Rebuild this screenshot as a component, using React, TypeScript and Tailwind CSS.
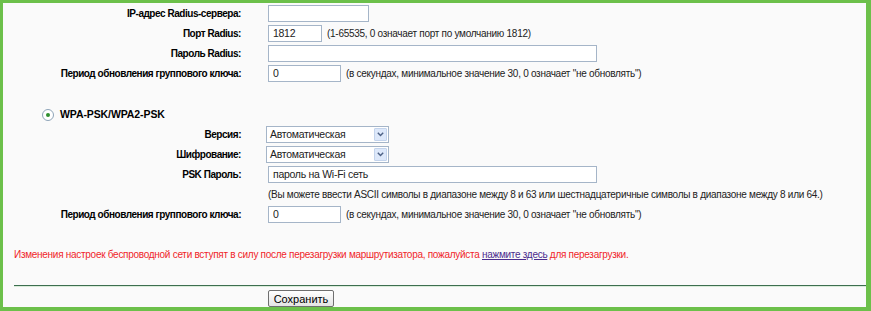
import React from 'react';

const labelCls = 'w-[238px] shrink-0 text-right text-[10px] tracking-[-0.46px] font-bold text-black';
const inputCls =
  'h-[17px] border border-[#a5b5c8] bg-white px-[4px] text-[10.5px] leading-[15px] text-[#222] outline-none';

function Row({ label, children, className = '' }: { label: string; children?: React.ReactNode; className?: string }) {
  return (
    <div className={`flex h-[20px] items-center ${className}`}>
      <div className={labelCls}>{label}</div>
      <div className="ml-[27px] flex items-center">{children}</div>
    </div>
  );
}

function Hint({ children, className = '' }: { children: React.ReactNode; className?: string }) {
  return <span className={`ml-[5px] whitespace-nowrap text-[#222] ${className}`}>{children}</span>;
}

function Select({ value }: { value: string }) {
  return (
    <div className="-ml-[2px] flex h-[17px] w-[123px] items-center border border-[#a5b5c8] bg-white">
      <span className="flex-1 pl-[3px] text-[10.5px] leading-[15px] text-[#222]">{value}</span>
      <span className="mr-[1px] flex h-[13px] w-[13px] items-center justify-center rounded-[1px] border border-[#c4d4ec] bg-[#dde8fa]">
        <svg width="7" height="5" viewBox="0 0 7 5">
          <path d="M0.8 0.8 L3.5 3.6 L6.2 0.8" fill="none" stroke="#4d6185" strokeWidth="1.4" />
        </svg>
      </span>
    </div>
  );
}

export default function App() {
  return (
    <div className="h-[311px] w-[871px] overflow-hidden border-b-[4px] border-l-[3px] border-r-[5px] border-t-[3px] border-[#6cc04a] bg-[#fafafa] font-['Liberation_Sans',Arial,sans-serif] text-[10px] tracking-[-0.28px]">
      {/* Radius settings */}
      <Row label="IP-адрес Radius-сервера:">
        <input className={`${inputCls} w-[101px]`} defaultValue="" />
      </Row>
      <Row label="Порт Radius:">
        <input className={`${inputCls} w-[54px]`} defaultValue="1812" />
        <Hint>(1-65535, 0 означает порт по умолчанию 1812)</Hint>
      </Row>
      <Row label="Пароль Radius:">
        <input className={`${inputCls} w-[329px]`} defaultValue="" />
      </Row>
      <Row label="Период обновления группового ключа:">
        <input className={`${inputCls} w-[73px]`} defaultValue="0" />
        <Hint>(в секундах, минимальное значение 30, 0 означает "не обновлять")</Hint>
      </Row>

      {/* WPA-PSK */}
      <div className="mt-[23px] flex h-[18px] items-center pl-[39px]">
        <span className="flex h-[12px] w-[12px] items-center justify-center rounded-full border border-[#8ea4b8] bg-white">
          <span className="h-[4px] w-[4px] rounded-full bg-[#2f8f2f]" />
        </span>
        <span className="ml-[6px] text-[10.5px] tracking-[-0.1px] font-bold text-black">WPA-PSK/WPA2-PSK</span>
      </div>
      <Row label="Версия:">
        <Select value="Автоматическая" />
      </Row>
      <Row label="Шифрование:">
        <Select value="Автоматическая" />
      </Row>
      <Row label="PSK Пароль:">
        <input className={`${inputCls} w-[329px]`} defaultValue="пароль на Wi-Fi сеть" />
      </Row>
      <div className="flex h-[20px] items-center whitespace-nowrap pl-[265px] text-[#222]">
        (Вы можете ввести ASCII символы в диапазоне между 8 и 63 или шестнадцатеричные символы в диапазоне между 8 или 64.)
      </div>
      <Row label="Период обновления группового ключа:">
        <input className={`${inputCls} w-[73px]`} defaultValue="0" />
        <Hint>(в секундах, минимальное значение 30, 0 означает "не обновлять")</Hint>
      </Row>

      {/* Notice */}
      <div className="mt-[20px] flex h-[20px] items-center whitespace-nowrap pl-[11px] text-[#f01f2a]">
        Изменения настроек беспроводной сети вступят в силу после перезагрузки маршрутизатора, пожалуйста&nbsp;
        <a className="text-[#4b2c8e] underline">нажмите здесь</a>&nbsp;для перезагрузки.
      </div>

      <div className="ml-[11px] mt-[21px] border-t border-[#3d6e50]" />
      <div className="ml-[11px] border-t border-[#d9ecd9]" />

      <div className="mt-[3px] pl-[265px]">
        <button className="h-[17px] w-[66px] rounded-[2px] border border-[#6f6f6f] bg-gradient-to-b from-white to-[#e4e4e4] text-[11px] tracking-normal leading-[14px] text-black">
          Сохранить
        </button>
      </div>
    </div>
  );
}
